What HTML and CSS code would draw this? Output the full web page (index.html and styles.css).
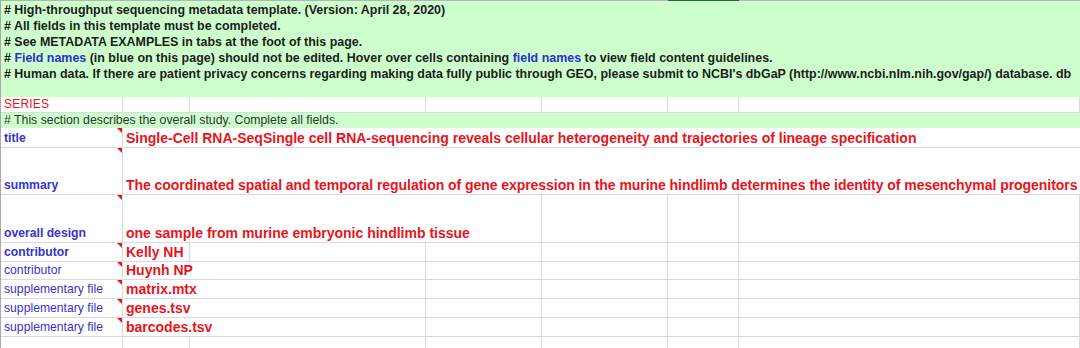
FILE: index.html
```html
<!DOCTYPE html>
<html lang="en">
<head>
<meta charset="utf-8">
<title>GEO metadata template</title>
<link rel="stylesheet" href="styles.css">
</head>
<body>
<div class="sheet">
  <div class="row edge">
    <div></div><div></div><div></div><div></div><div></div><div class="sel"></div><div></div>
  </div>
  <div class="notes">
    <p># High-throughput sequencing metadata template. (Version: April 28, 2020)</p>
    <p># All fields in this template must be completed.</p>
    <p># See METADATA EXAMPLES in tabs at the foot of this page.</p>
    <p># <span class="fn">Field names</span> (in blue on this page) should not be edited. Hover over cells containing <span class="fn">field names</span> to view field content guidelines.</p>
    <p># Human data. If there are patient privacy concerns regarding making data fully public through GEO, please submit to NCBI's dbGaP (http://www.ncbi.nlm.nih.gov/gap/) database. db</p>
  </div>

  <div class="row h16">
    <div class="cell series">SERIES</div><div class="cell"></div><div class="cell"></div><div class="cell"></div><div class="cell"></div><div class="cell"></div><div class="cell"></div>
  </div>
  <div class="row h15">
    <div class="cell comment span-all"># This section describes the overall study. Complete all fields.</div>
  </div>
  <div class="row h20">
    <div class="cell label bold note">title</div>
    <div class="cell value span-rest">Single-Cell RNA-SeqSingle cell RNA-sequencing reveals cellular heterogeneity and trajectories of lineage specification</div>
  </div>
  <div class="row h47">
    <div class="cell label bold note">summary</div>
    <div class="cell value span-rest tight">The coordinated spatial and temporal regulation of gene expression in the murine hindlimb determines the identity of mesenchymal progenitors</div>
  </div>
  <div class="row h48">
    <div class="cell label bold note">overall design</div>
    <div class="cell value span3">one sample from murine embryonic hindlimb tissue</div>
    <div class="cell"></div><div class="cell"></div><div class="cell"></div>
  </div>
  <div class="row h19">
    <div class="cell label bold note">contributor</div>
    <div class="cell value single">Kelly NH</div>
    <div class="cell"></div><div class="cell"></div><div class="cell"></div><div class="cell"></div><div class="cell"></div>
  </div>
  <div class="row h18">
    <div class="cell label note">contributor</div>
    <div class="cell value span2">Huynh NP</div>
    <div class="cell"></div><div class="cell"></div><div class="cell"></div><div class="cell"></div>
  </div>
  <div class="row h19">
    <div class="cell label note">supplementary file</div>
    <div class="cell value span2">matrix.mtx</div>
    <div class="cell"></div><div class="cell"></div><div class="cell"></div><div class="cell"></div>
  </div>
  <div class="row h19">
    <div class="cell label note">supplementary file</div>
    <div class="cell value span2">genes.tsv</div>
    <div class="cell"></div><div class="cell"></div><div class="cell"></div><div class="cell"></div>
  </div>
  <div class="row h19">
    <div class="cell label note">supplementary file</div>
    <div class="cell value span2">barcodes.tsv</div>
    <div class="cell"></div><div class="cell"></div><div class="cell"></div><div class="cell"></div>
  </div>
  <div class="row h19">
    <div class="cell"></div><div class="cell"></div><div class="cell"></div><div class="cell"></div><div class="cell"></div><div class="cell"></div><div class="cell"></div>
  </div>
</div>
</body>
</html>
```

FILE: styles.css
```css
html, body {
  margin: 0;
  padding: 0;
  background: #ffffff;
  overflow: hidden;
}

body {
  width: 1080px;
  height: 348px;
  font-family: "Liberation Sans", Arial, sans-serif;
}

.sheet {
  border-left: 1px solid #a9a9a9;
  width: 1079px;
}

.row {
  display: grid;
  grid-template-columns: 122px 67px 236px 116px 126px 71px 1fr;
}

.edge {
  height: 1px;
  background: #b4b4b4;
}

.edge .sel {
  background: #1f6b3d;
}

.notes {
  background: #ccffcc;
  height: 96px;
  padding: 1px 0 0 3px;
  box-sizing: border-box;
  font-size: 12.45px;
  font-weight: bold;
  line-height: 16px;
  color: #1c1c1c;
  white-space: nowrap;
  overflow: hidden;
}

.notes p {
  margin: 0;
}

.fn {
  color: #2f2fd2;
}

.cell {
  box-sizing: border-box;
  border-right: 1px solid #dadada;
  border-bottom: 1px solid #dadada;
  display: flex;
  align-items: flex-end;
  padding: 0 0 0 3px;
  white-space: nowrap;
  overflow: hidden;
  min-width: 0;
  position: relative;
}

.h15 { height: 15px; }
.h16 { height: 16px; }
.h18 { height: 18px; }
.h19 { height: 19px; }
.h20 { height: 20px; }
.h47 { height: 47px; }
.h48 { height: 48px; }

.span-all { grid-column: 1 / -1; }
.span-rest { grid-column: 2 / -1; }
.span2 { grid-column: span 2; }
.span3 { grid-column: span 3; }

.series {
  color: #e8141b;
  font-size: 12px;
  line-height: 15px;
  letter-spacing: 0.2px;
}

.comment {
  background: #ccffcc;
  border-right: none;
  border-bottom: none;
  color: #333333;
  font-size: 12.3px;
  line-height: 15px;
  align-items: center;
}

.label {
  color: #3434cc;
  font-size: 12.2px;
  line-height: 17px;
  overflow: visible;
}

.bold {
  font-weight: bold;
}

.note::after {
  content: "";
  position: absolute;
  top: 0;
  right: 0;
  width: 5px;
  height: 5px;
  background: #e8141b;
  clip-path: polygon(0 0, 100% 0, 100% 100%);
}

.value {
  color: #e8141b;
  font-size: 14px;
  font-weight: bold;
  line-height: 17px;
}

.value.span-rest {
  border-right: none;
}

.tight {
  letter-spacing: -0.05px;
}
```
